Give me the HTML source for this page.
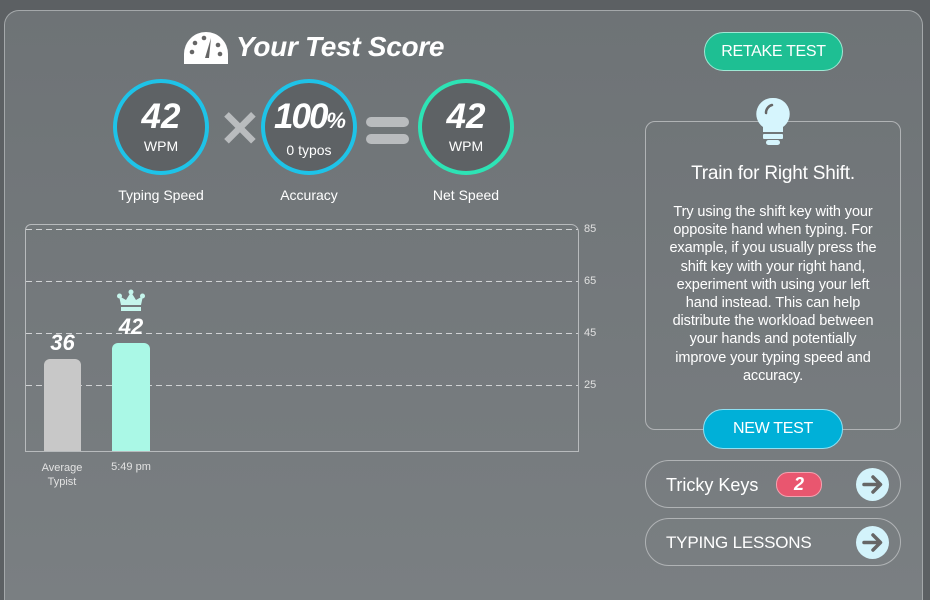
<!DOCTYPE html>
<html><head><style>
*{margin:0;padding:0;box-sizing:border-box}
html,body{width:930px;height:600px;overflow:hidden}
body{background:#5c6063;font-family:"Liberation Sans",sans-serif;position:relative;color:#fff}
.card{position:absolute;left:4px;top:10px;width:919px;height:590px;border:1px solid #a4a8aa;border-bottom:none;border-radius:15px 15px 0 0;background:linear-gradient(#6e7376,#7a7f82)}
.abs{position:absolute}
.circ{position:absolute;width:96px;height:96px;border-radius:50%;border:4px solid #1ec3e8;background:#5e6265;text-align:center}
.circ .n{font-size:35px;font-weight:bold;font-style:italic;margin-top:15px;line-height:38px}
.circ .s{font-size:14px;margin-top:2px}
.lbl{position:absolute;font-size:14px;text-align:center;width:120px}
.grid{position:absolute;left:26px;width:552px;height:1px;background:repeating-linear-gradient(90deg,#d0d2d4 0 6px,transparent 6px 10px)}
.ax{position:absolute;left:584px;font-size:11px;color:#e0e0e0}
.pill{position:absolute;left:645px;width:256px;height:48px;border:1px solid #b0b3b5;border-radius:24px;font-size:18px;padding:14px 0 0 20px}
.arr{position:absolute;right:11px;top:7px;width:33px;height:33px;border-radius:50%;background:#d3f3fb}
</style></head><body>
<div class="card"></div>
<svg class="abs" style="left:183px;top:30px" width="46" height="36" viewBox="0 0 46 36"><path d="M23 2A22 22 0 0 0 1 24v10h44V24A22 22 0 0 0 23 2z" fill="#fff"/><circle cx="9" cy="22" r="2.3" fill="#666"/><circle cx="12" cy="13" r="2.3" fill="#666"/><circle cx="21" cy="8" r="2.3" fill="#666"/><circle cx="35" cy="15" r="2.3" fill="#666"/><circle cx="37" cy="24" r="2.3" fill="#666"/><path d="M28 8L22 28h4z" fill="#666"/></svg>
<div class="abs" style="left:236px;top:31px;font-size:28px;font-weight:bold;font-style:italic;letter-spacing:-0.3px">Your Test Score</div>
<div class="circ" style="left:113px;top:79px"><div class="n">42</div><div class="s">WPM</div></div>
<div class="abs" style="left:219px;top:111px;font-size:50px;font-weight:bold;color:#b9bcbe;line-height:36px">✕</div>
<div class="circ" style="left:261px;top:79px"><div class="n" style="letter-spacing:-2px">100<span style="font-size:22px">%</span></div><div class="s">0 typos</div></div>
<div class="abs" style="left:366px;top:117px;width:43px;height:10px;border-radius:5px;background:#b9bcbe"></div>
<div class="abs" style="left:366px;top:134px;width:43px;height:10px;border-radius:5px;background:#b9bcbe"></div>
<div class="circ" style="left:418px;top:79px;border-color:#2de3b5"><div class="n">42</div><div class="s">WPM</div></div>
<div class="lbl" style="left:101px;top:187px">Typing Speed</div>
<div class="lbl" style="left:249px;top:187px">Accuracy</div>
<div class="lbl" style="left:406px;top:187px">Net Speed</div>
<div class="abs" style="left:25px;top:224px;width:554px;height:228px;border:1px solid #b8bbbd;border-radius:6px 8px 0 0"></div>
<div class="grid" style="top:229px"></div><div class="grid" style="top:281px"></div><div class="grid" style="top:333px"></div><div class="grid" style="top:385px"></div>
<div class="ax" style="top:223px">85</div><div class="ax" style="top:275px">65</div><div class="ax" style="top:327px">45</div><div class="ax" style="top:379px">25</div>
<div class="abs" style="left:44px;top:359px;width:37px;height:92px;background:#c8c8c8;border-radius:6px 6px 0 0"></div>
<div class="abs" style="left:112px;top:343px;width:38px;height:108px;background:#aaf8e6;border-radius:6px 6px 0 0"></div>
<div class="abs" style="left:44px;top:330px;width:37px;text-align:center;font-size:22px;font-weight:bold;font-style:italic">36</div>
<div class="abs" style="left:112px;top:314px;width:38px;text-align:center;font-size:22px;font-weight:bold;font-style:italic">42</div>
<svg class="abs" style="left:117px;top:289px" width="28" height="23" viewBox="0 0 28 23"><path d="M4 16L2 7l7 4 5-8 5 8 7-4-2 9z" fill="#c5f5ec"/><circle cx="14" cy="3" r="2.5" fill="#c5f5ec"/><circle cx="2.5" cy="7" r="2.5" fill="#c5f5ec"/><circle cx="25.5" cy="7" r="2.5" fill="#c5f5ec"/><rect x="4" y="18" width="20" height="4" fill="#c5f5ec"/></svg>
<div class="abs" style="left:27px;top:461px;width:70px;text-align:center;font-size:11px;color:#e2e2e2;line-height:14px">Average<br>Typist</div>
<div class="abs" style="left:100px;top:461px;width:62px;text-align:center;font-size:11px;color:#e2e2e2">5:49 pm</div>
<div class="abs" style="left:704px;top:32px;width:139px;height:39px;border-radius:20px;background:#1ebf93;border:1px solid #9ee8d4;font-size:16px;text-align:center;line-height:37px;letter-spacing:-0.3px">RETAKE TEST</div>
<div class="abs" style="left:645px;top:121px;width:256px;height:309px;border:1px solid #b0b3b5;border-radius:10px"></div>
<svg class="abs" style="left:754px;top:96px" width="38" height="52" viewBox="0 0 38 52"><path d="M19 2A16 16 0 0 0 9 31v5h20v-5A16 16 0 0 0 19 2z" fill="#d6f5fd"/><rect x="9" y="38" width="20" height="5" rx="1" fill="#d6f5fd"/><rect x="12" y="44" width="14" height="5" rx="2.5" fill="#d6f5fd"/><path d="M12 17a8 8 0 0 1 6-8" stroke="#666" stroke-width="2.5" fill="none" stroke-linecap="round"/></svg>
<div class="abs" style="left:645px;top:163px;width:256px;text-align:center;font-size:19px;letter-spacing:-0.2px">Train for Right Shift.</div>
<div class="abs" style="left:646px;top:203px;width:254px;text-align:center;font-size:14.5px;line-height:18.2px;letter-spacing:-0.1px;white-space:nowrap">Try using the shift key with your<br>opposite hand when typing. For<br>example, if you usually press the<br>shift key with your right hand,<br>experiment with using your left<br>hand instead. This can help<br>distribute the workload between<br>your hands and potentially<br>improve your typing speed and<br>accuracy.</div>
<div class="abs" style="left:703px;top:409px;width:140px;height:40px;border-radius:20px;background:#00b0d8;border:1px solid #8ee0f2;font-size:16px;text-align:center;line-height:38px;letter-spacing:-0.3px">NEW TEST</div>
<div class="pill" style="top:460px">Tricky Keys<div class="abs" style="left:130px;top:11px;width:46px;height:25px;border-radius:12px;background:#e9566f;border:1px solid #f5a0ae;text-align:center;font-weight:bold;font-style:italic;line-height:23px">2</div><svg class="arr" viewBox="0 0 33 33"><path d="M8 16.5h16M17 9l7.5 7.5L17 24" stroke="#666" stroke-width="3.5" fill="none" stroke-linecap="round" stroke-linejoin="round"/></svg></div>
<div class="pill" style="top:518px;font-size:17px;letter-spacing:-0.2px">TYPING LESSONS<svg class="arr" viewBox="0 0 33 33"><path d="M8 16.5h16M17 9l7.5 7.5L17 24" stroke="#666" stroke-width="3.5" fill="none" stroke-linecap="round" stroke-linejoin="round"/></svg></div>
</body></html>
